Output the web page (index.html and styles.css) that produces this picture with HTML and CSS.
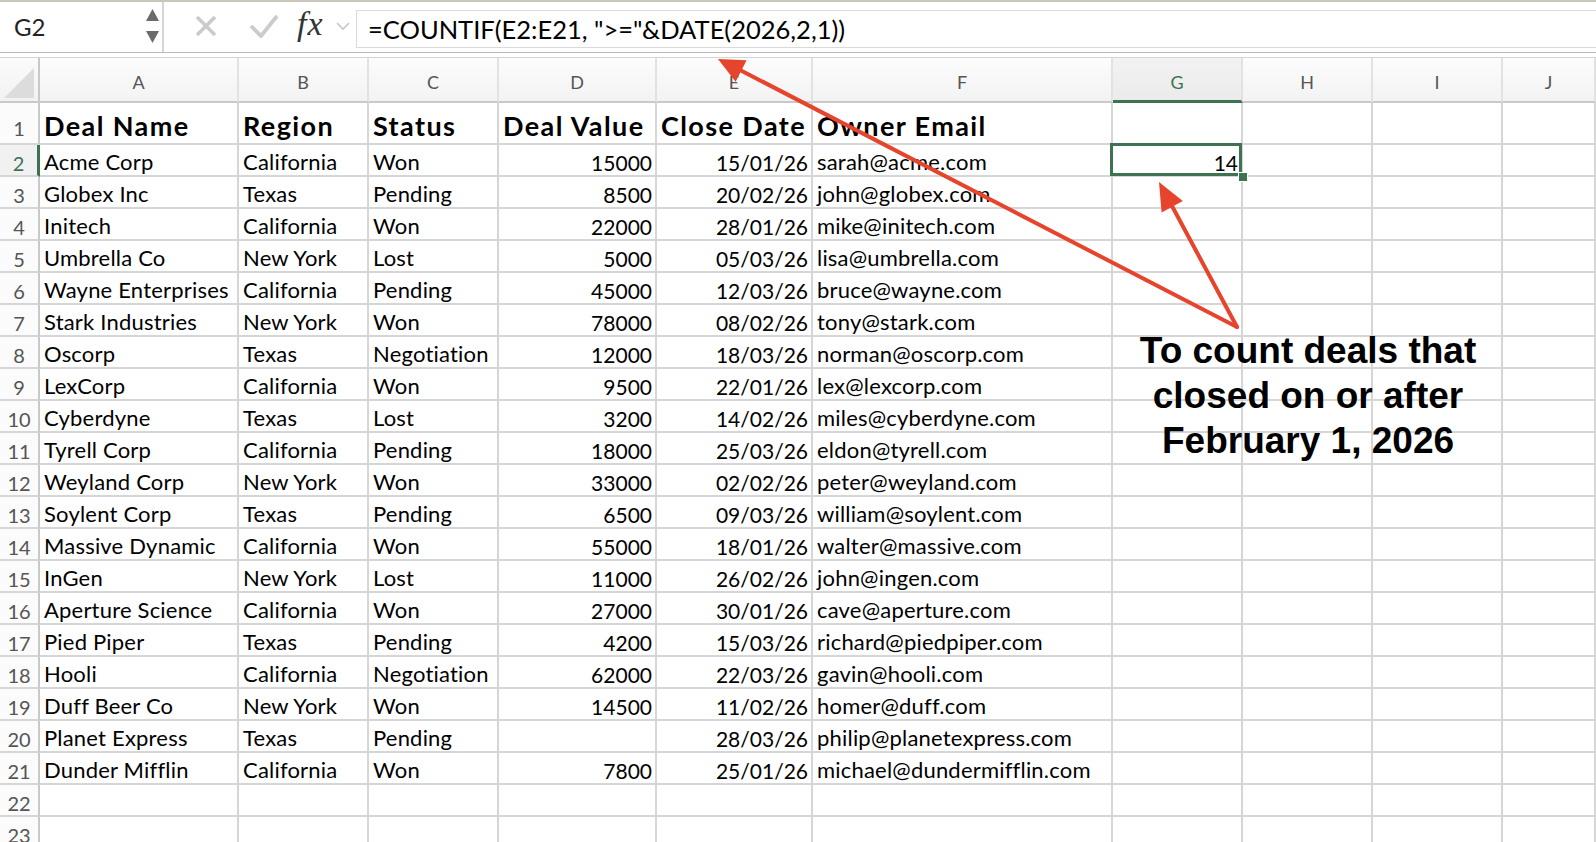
FILE: index.html
```html
<!DOCTYPE html>
<html lang="en">
<head>
<meta charset="utf-8">
<title>Deals sheet</title>
<link rel="stylesheet" href="styles.css">
</head>
<body>
<div class="app">
  <div class="topstrip"></div>
  <div class="fbar">
    <div class="namebox">
      <span class="nb-text">G2</span>
      <svg class="spin" width="20" height="50" viewBox="0 0 20 50">
        <polygon points="4,20 17,20 10.5,8" fill="#6b6b6b"/>
        <polygon points="4,30 17,30 10.5,42" fill="#6b6b6b"/>
      </svg>
    </div>
    <div class="ficons">
      <svg class="ico-x" width="24" height="24" viewBox="0 0 24 24">
        <path d="M3 3 L21 21 M21 3 L3 21" stroke="#cbcbcb" stroke-width="3.6" fill="none"/>
      </svg>
      <svg class="ico-check" width="30" height="24" viewBox="0 0 30 24">
        <path d="M2 12 L12 22 L28 2" stroke="#cbcbcb" stroke-width="3.8" fill="none"/>
      </svg>
      <span class="fx">fx</span>
      <svg class="ico-chev" width="14" height="10" viewBox="0 0 14 10">
        <path d="M1 2 L7 8 L13 2" stroke="#c8c8c8" stroke-width="1.6" fill="none"/>
      </svg>
    </div>
    <div class="finput">=COUNTIF(E2:E21, "&gt;="&amp;DATE(2026,2,1))</div>
  </div>
  <div class="sep"></div>

  <div class="sheet">
    <!-- column header row -->
    <div class="corner"><span class="tri"></span></div>
    <div class="ch">A</div><div class="ch">B</div><div class="ch">C</div><div class="ch">D</div><div class="ch">E</div><div class="ch">F</div><div class="ch ch-sel">G</div><div class="ch">H</div><div class="ch">I</div><div class="ch">J</div>

    <!-- row 1 -->
    <div class="rh r1">1</div>
    <div class="c b">Deal Name</div><div class="c b">Region</div><div class="c b">Status</div><div class="c b">Deal Value</div><div class="c b">Close Date</div><div class="c b">Owner Email</div><div class="c b"></div><div class="c b"></div><div class="c b"></div><div class="c b"></div>

    <div class="rh rh-sel">2</div>
    <div class="c">Acme Corp</div><div class="c">California</div><div class="c">Won</div><div class="c n">15000</div><div class="c n">15/01/26</div><div class="c">sarah@acme.com</div><div class="c n sel">14<span class="handle"></span></div><div class="c"></div><div class="c"></div><div class="c"></div>

    <div class="rh">3</div>
    <div class="c">Globex Inc</div><div class="c">Texas</div><div class="c">Pending</div><div class="c n">8500</div><div class="c n">20/02/26</div><div class="c">john@globex.com</div><div class="c"></div><div class="c"></div><div class="c"></div><div class="c"></div>

    <div class="rh">4</div>
    <div class="c">Initech</div><div class="c">California</div><div class="c">Won</div><div class="c n">22000</div><div class="c n">28/01/26</div><div class="c">mike@initech.com</div><div class="c"></div><div class="c"></div><div class="c"></div><div class="c"></div>

    <div class="rh">5</div>
    <div class="c">Umbrella Co</div><div class="c">New York</div><div class="c">Lost</div><div class="c n">5000</div><div class="c n">05/03/26</div><div class="c">lisa@umbrella.com</div><div class="c"></div><div class="c"></div><div class="c"></div><div class="c"></div>

    <div class="rh">6</div>
    <div class="c">Wayne Enterprises</div><div class="c">California</div><div class="c">Pending</div><div class="c n">45000</div><div class="c n">12/03/26</div><div class="c">bruce@wayne.com</div><div class="c"></div><div class="c"></div><div class="c"></div><div class="c"></div>

    <div class="rh">7</div>
    <div class="c">Stark Industries</div><div class="c">New York</div><div class="c">Won</div><div class="c n">78000</div><div class="c n">08/02/26</div><div class="c">tony@stark.com</div><div class="c"></div><div class="c"></div><div class="c"></div><div class="c"></div>

    <div class="rh">8</div>
    <div class="c">Oscorp</div><div class="c">Texas</div><div class="c">Negotiation</div><div class="c n">12000</div><div class="c n">18/03/26</div><div class="c">norman@oscorp.com</div><div class="c"></div><div class="c"></div><div class="c"></div><div class="c"></div>

    <div class="rh">9</div>
    <div class="c">LexCorp</div><div class="c">California</div><div class="c">Won</div><div class="c n">9500</div><div class="c n">22/01/26</div><div class="c">lex@lexcorp.com</div><div class="c"></div><div class="c"></div><div class="c"></div><div class="c"></div>

    <div class="rh">10</div>
    <div class="c">Cyberdyne</div><div class="c">Texas</div><div class="c">Lost</div><div class="c n">3200</div><div class="c n">14/02/26</div><div class="c">miles@cyberdyne.com</div><div class="c"></div><div class="c"></div><div class="c"></div><div class="c"></div>

    <div class="rh">11</div>
    <div class="c">Tyrell Corp</div><div class="c">California</div><div class="c">Pending</div><div class="c n">18000</div><div class="c n">25/03/26</div><div class="c">eldon@tyrell.com</div><div class="c"></div><div class="c"></div><div class="c"></div><div class="c"></div>

    <div class="rh">12</div>
    <div class="c">Weyland Corp</div><div class="c">New York</div><div class="c">Won</div><div class="c n">33000</div><div class="c n">02/02/26</div><div class="c">peter@weyland.com</div><div class="c"></div><div class="c"></div><div class="c"></div><div class="c"></div>

    <div class="rh">13</div>
    <div class="c">Soylent Corp</div><div class="c">Texas</div><div class="c">Pending</div><div class="c n">6500</div><div class="c n">09/03/26</div><div class="c">william@soylent.com</div><div class="c"></div><div class="c"></div><div class="c"></div><div class="c"></div>

    <div class="rh">14</div>
    <div class="c">Massive Dynamic</div><div class="c">California</div><div class="c">Won</div><div class="c n">55000</div><div class="c n">18/01/26</div><div class="c">walter@massive.com</div><div class="c"></div><div class="c"></div><div class="c"></div><div class="c"></div>

    <div class="rh">15</div>
    <div class="c">InGen</div><div class="c">New York</div><div class="c">Lost</div><div class="c n">11000</div><div class="c n">26/02/26</div><div class="c">john@ingen.com</div><div class="c"></div><div class="c"></div><div class="c"></div><div class="c"></div>

    <div class="rh">16</div>
    <div class="c">Aperture Science</div><div class="c">California</div><div class="c">Won</div><div class="c n">27000</div><div class="c n">30/01/26</div><div class="c">cave@aperture.com</div><div class="c"></div><div class="c"></div><div class="c"></div><div class="c"></div>

    <div class="rh">17</div>
    <div class="c">Pied Piper</div><div class="c">Texas</div><div class="c">Pending</div><div class="c n">4200</div><div class="c n">15/03/26</div><div class="c">richard@piedpiper.com</div><div class="c"></div><div class="c"></div><div class="c"></div><div class="c"></div>

    <div class="rh">18</div>
    <div class="c">Hooli</div><div class="c">California</div><div class="c">Negotiation</div><div class="c n">62000</div><div class="c n">22/03/26</div><div class="c">gavin@hooli.com</div><div class="c"></div><div class="c"></div><div class="c"></div><div class="c"></div>

    <div class="rh">19</div>
    <div class="c">Duff Beer Co</div><div class="c">New York</div><div class="c">Won</div><div class="c n">14500</div><div class="c n">11/02/26</div><div class="c">homer@duff.com</div><div class="c"></div><div class="c"></div><div class="c"></div><div class="c"></div>

    <div class="rh">20</div>
    <div class="c">Planet Express</div><div class="c">Texas</div><div class="c">Pending</div><div class="c n"></div><div class="c n">28/03/26</div><div class="c">philip@planetexpress.com</div><div class="c"></div><div class="c"></div><div class="c"></div><div class="c"></div>

    <div class="rh">21</div>
    <div class="c">Dunder Mifflin</div><div class="c">California</div><div class="c">Won</div><div class="c n">7800</div><div class="c n">25/01/26</div><div class="c">michael@dundermifflin.com</div><div class="c"></div><div class="c"></div><div class="c"></div><div class="c"></div>

    <div class="rh">22</div>
    <div class="c"></div><div class="c"></div><div class="c"></div><div class="c"></div><div class="c"></div><div class="c"></div><div class="c"></div><div class="c"></div><div class="c"></div><div class="c"></div>

    <div class="rh">23</div>
    <div class="c"></div><div class="c"></div><div class="c"></div><div class="c"></div><div class="c"></div><div class="c"></div><div class="c"></div><div class="c"></div><div class="c"></div><div class="c"></div>
  </div>

  <svg class="arrows" width="1596" height="842" viewBox="0 0 1596 842">
    <line x1="1237" y1="327" x2="740" y2="70" stroke="#e6442c" stroke-width="4" stroke-linecap="round"/>
    <polygon points="718,59 746.6,60.3 735.6,81.7" fill="#e6442c"/>
    <line x1="1237" y1="327" x2="1172" y2="206" stroke="#e6442c" stroke-width="4" stroke-linecap="round"/>
    <polygon points="1159,182 1182.8,201 1161.6,212.4" fill="#e6442c"/>
  </svg>

  <div class="note">To count deals that<br>closed on or after<br>February 1, 2026</div>
</div>
</body>
</html>
```

FILE: styles.css
```css
* { box-sizing: border-box; }

html, body {
  margin: 0;
  padding: 0;
  background: #ffffff;
}

.app {
  position: relative;
  width: 1596px;
  height: 842px;
  overflow: hidden;
  font-family: Lato, "Liberation Sans", sans-serif;
  color: #000;
}

.topstrip {
  height: 2px;
  background: #cac6ba;
}

.fbar {
  height: 51px;
  display: flex;
  align-items: stretch;
  background: #fff;
  border-bottom: 1px solid #b9b9b9;
}

.namebox {
  width: 164px;
  border-right: 2px solid #d6d6d6;
  display: flex;
  align-items: center;
  justify-content: space-between;
  padding-left: 14px;
  padding-right: 0;
}

.nb-text {
  font-size: 24px;
  color: #222;
  margin-top: -2px;
}

.spin {
  display: block;
  margin-top: -2px;
}

.ficons {
  width: 192px;
  display: flex;
  align-items: center;
  padding-left: 30px;
  margin-top: -2px;
}

.ico-x { display: block; margin-right: 31px; }
.ico-check { display: block; margin-right: 18px; }

.fx {
  font-family: "Liberation Serif", "DejaVu Serif", serif;
  font-style: italic;
  font-size: 34px;
  color: #333;
  letter-spacing: 1px;
  margin-right: 12px;
  margin-top: -4px;
}

.ico-chev { display: block; }

.finput {
  flex: 1;
  margin: 8px 0 4px 0;
  border: 1px solid #dadada;
  border-right: none;
  display: flex;
  align-items: center;
  padding-left: 11px;
  font-size: 25.5px;
  color: #000;
  white-space: nowrap;
}

.sep {
  height: 5px;
  background: #fff;
  border-bottom: 1px solid #d4d4d4;
}

.sheet {
  display: grid;
  grid-template-columns: 40px 199px 130px 130px 158px 156px 300px 130px 130px 130px 1fr;
  grid-template-rows: 45px 42px repeat(22, 32px);
}

.corner {
  position: relative;
  background: linear-gradient(#fbfbfb, #f2f2f2);
  border-right: 2px solid #c9c9c9;
  border-bottom: 2px solid #c9c9c9;
}

.tri {
  position: absolute;
  left: 4px;
  top: 10px;
  width: 30px;
  height: 30px;
  background: #dcdcdc;
  clip-path: polygon(100% 0, 100% 100%, 0 100%);
}

.ch {
  display: flex;
  align-items: flex-end;
  justify-content: center;
  padding-bottom: 8px;
  font-size: 18px;
  color: #555;
  background: linear-gradient(#fcfcfc, #f3f3f3);
  border-right: 2px solid #e2e2e2;
  border-bottom: 2px solid #c9c9c9;
}

.ch-sel {
  color: #3d7350;
  background: linear-gradient(#f2f2f2, #ebebeb);
  border-bottom: 3px solid #3d7350;
  padding-bottom: 7px;
}

.rh {
  display: flex;
  align-items: flex-end;
  justify-content: center;
  padding-bottom: 0;
  font-size: 20px;
  color: #555;
  background: #fbfbfb;
  border-right: 2px solid #c9c9c9;
  border-bottom: 2px solid #d6d6d6;
}

.rh.r1 { padding-bottom: 3px; }

.rh-sel {
  color: #3d7350;
  background: #f1f1f1;
  border-right: 3px solid #3d7350;
}

.c {
  display: flex;
  align-items: flex-end;
  padding: 0 4px 0 4px;
  font-size: 22px;
  letter-spacing: 0.2px;
  line-height: 1.2;
  white-space: nowrap;
  overflow: visible;
  border-right: 2px solid #d6d6d6;
  border-bottom: 2px solid #d6d6d6;
}

.c.b {
  font-weight: 700;
  font-size: 27px;
  letter-spacing: 1.4px;
  padding-bottom: 1px;
}

.c.n {
  justify-content: flex-end;
  padding-right: 3px;
  font-size: 21px;
  letter-spacing: 0;
}

.sel {
  position: relative;
}

.sel::after {
  content: "";
  position: absolute;
  left: -3px;
  top: -2px;
  right: -1px;
  bottom: -1px;
  border: 3px solid #3d7350;
  pointer-events: none;
}

.handle {
  position: absolute;
  right: -7px;
  bottom: -7px;
  width: 10px;
  height: 10px;
  background: #3d7350;
  border: 1px solid #fff;
  z-index: 2;
}

.arrows {
  position: absolute;
  left: 0;
  top: 0;
  pointer-events: none;
}

.note {
  position: absolute;
  left: 1108px;
  top: 328px;
  width: 400px;
  text-align: center;
  font-family: "Liberation Sans", Arial, sans-serif;
  font-weight: 700;
  font-size: 37px;
  line-height: 45px;
  color: #000;
}
```
